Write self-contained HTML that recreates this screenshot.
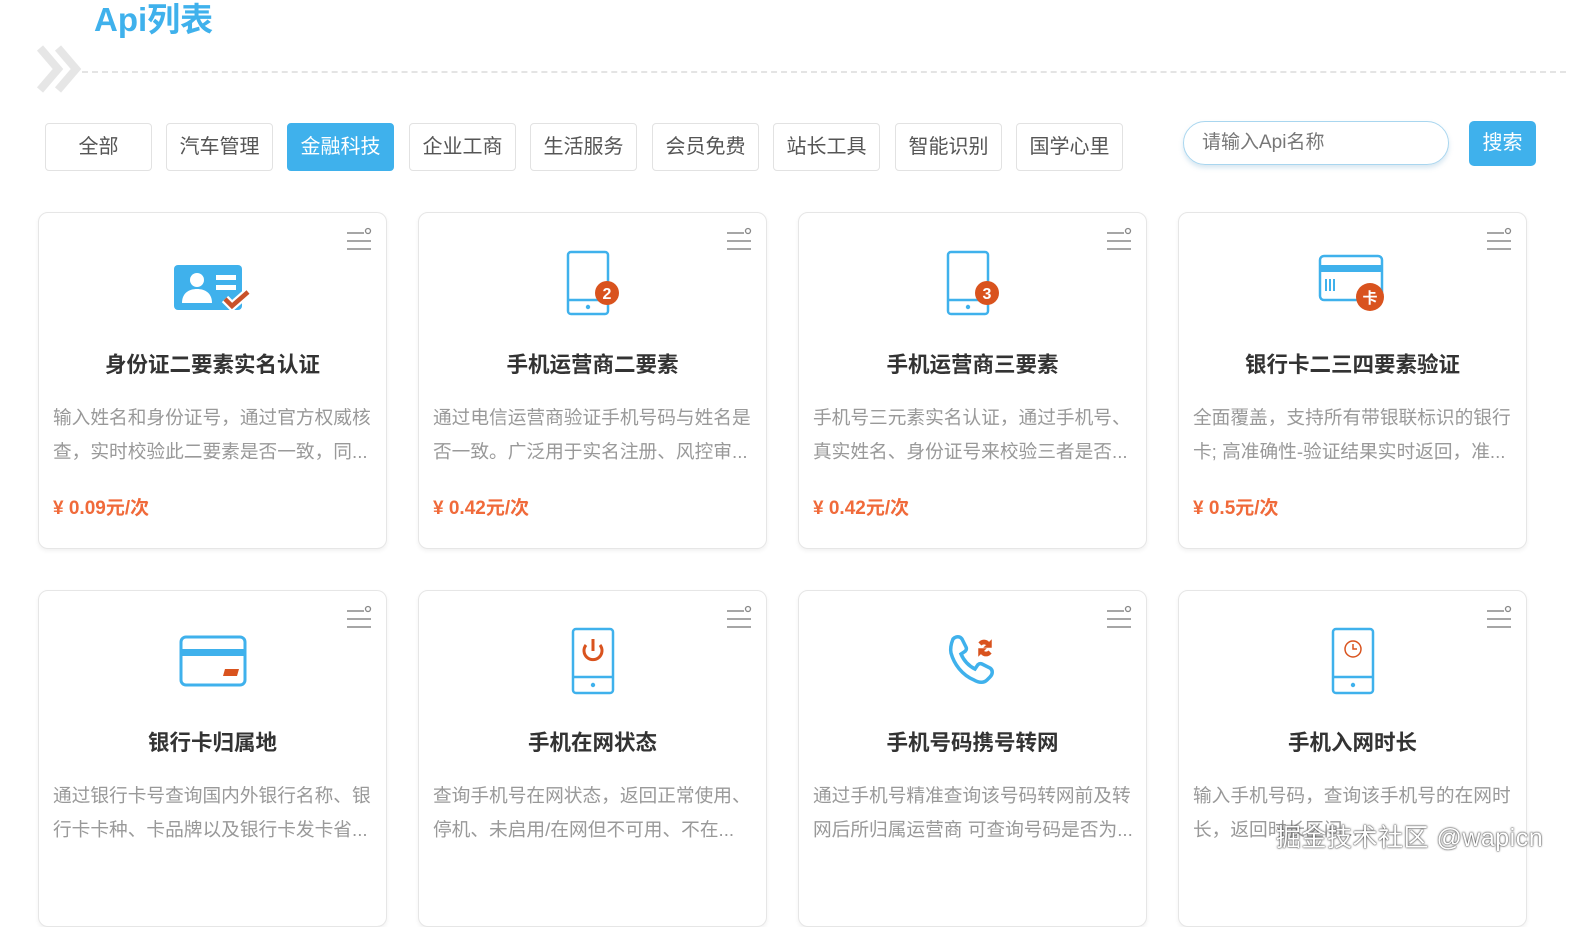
<!DOCTYPE html>
<html><head><meta charset="utf-8"><style>
*{margin:0;padding:0;box-sizing:border-box}
body{width:1586px;height:883px;overflow:hidden;background:#fff;font-family:"Liberation Sans","Noto Sans CJK SC",sans-serif;position:relative}
.title{position:absolute;left:94px;top:0;font-size:33px;font-weight:bold;color:#3fb1ec;line-height:40px}
.dash{position:absolute;left:82px;right:20px;top:71px;border-top:2px dashed #e4e4e4}
.chev{position:absolute;left:36px;top:44px}
.tab{position:absolute;top:123px;width:107px;height:48px;border:1px solid #e2e2e2;border-radius:4px;font-size:20px;color:#555;text-align:center;line-height:46px;background:#fff}
.tab.on{background:#3fb1ec;color:#fff;border-color:#3fb1ec}
.search{position:absolute;left:1183px;top:121px;width:266px;height:44px;border:1px solid #a9d6ef;border-radius:22px;box-shadow:0 3px 5px rgba(100,160,200,.25);font-size:19px;color:#777;line-height:42px;padding-left:18px}
.btn{position:absolute;left:1469px;top:121px;width:67px;height:45px;background:#3fb1ec;border-radius:5px;color:#fff;font-size:20px;text-align:center;line-height:45px}
.card{position:absolute;width:349px;height:337px;border:1px solid #e6e6e6;border-radius:10px;box-shadow:0 2px 4px rgba(0,0,0,.06);background:#fff}
.menu{position:absolute;right:14px;top:14px}
.icon{position:absolute;left:0;right:0;top:32px;height:76px;display:flex;justify-content:center;align-items:center}
.ct{position:absolute;left:0;right:0;top:135px;text-align:center;font-size:21.5px;font-weight:bold;color:#333}
.cd{position:absolute;left:14px;right:12px;top:188px;font-size:18.7px;line-height:34px;color:#999;height:68px;overflow:hidden}
.cp{position:absolute;left:14px;top:280px;font-size:19px;font-weight:bold;color:#f06a3a}
.wm{position:absolute;left:1276px;top:818px;font-size:25px;color:#fff;text-shadow:0 0 2px #333,0 0 1px #333;letter-spacing:0.5px}
</style></head><body>
<div class="title">Api列表</div>
<svg class="chev" width="48" height="50" viewBox="0 0 48 50"><path d="M4 4l18 21L4 46M22 4l18 21-18 21" fill="none" stroke="#e6e6e6" stroke-width="8"/></svg>
<div class="dash"></div>
<div class="tab" style="left:45px">全部</div>
<div class="tab" style="left:166px">汽车管理</div>
<div class="tab on" style="left:287px">金融科技</div>
<div class="tab" style="left:409px">企业工商</div>
<div class="tab" style="left:530px">生活服务</div>
<div class="tab" style="left:652px">会员免费</div>
<div class="tab" style="left:773px">站长工具</div>
<div class="tab" style="left:895px">智能识别</div>
<div class="tab" style="left:1016px">国学心里</div>
<div class="search">请输入Api名称</div>
<div class="btn">搜索</div>

<div class="card" style="left:38px;top:212px">
<svg class="menu" width="26" height="24"><path d="M1 6h17M1 14h24M1 22h24" stroke="#888" stroke-width="1.6"/><circle cx="22" cy="4" r="2.5" fill="none" stroke="#888" stroke-width="1.3"/></svg>
<div class="icon"><svg width="80" height="60" viewBox="0 0 80 60"><rect x="1" y="12" width="68" height="45" rx="4" fill="#3fb1ec"/><circle cx="24" cy="27" r="7" fill="#fff"/><path d="M9 50c0-10 7-14 15-14s15 4 15 14z" fill="#fff"/><rect x="43" y="22" width="20" height="5" fill="#fff"/><rect x="43" y="32" width="20" height="5" fill="#fff"/><path d="M52 46l7 7 16-14" stroke="#fff" stroke-width="9" fill="none"/><path d="M52 46l7 7 16-14" stroke="#c9522a" stroke-width="4.5" fill="none"/></svg></div>
<div class="ct">身份证二要素实名认证</div>
<div class="cd">输入姓名和身份证号，通过官方权威核查，实时校验此二要素是否一致，同...</div>
<div class="cp">¥ 0.09元/次</div></div>

<div class="card" style="left:418px;top:212px">
<svg class="menu" width="26" height="24"><path d="M1 6h17M1 14h24M1 22h24" stroke="#888" stroke-width="1.6"/><circle cx="22" cy="4" r="2.5" fill="none" stroke="#888" stroke-width="1.3"/></svg>
<div class="icon"><svg width="60" height="70" viewBox="0 0 60 70"><rect x="5" y="4" width="40" height="62" rx="3" fill="none" stroke="#3fb1ec" stroke-width="2.5"/><path d="M5 52h40" stroke="#3fb1ec" stroke-width="2.5"/><circle cx="25" cy="59" r="2.2" fill="#3fb1ec"/><circle cx="44" cy="45" r="12" fill="#d9531e"/><text x="44" y="51" font-size="16" font-weight="bold" fill="#fff" text-anchor="middle" font-family="Liberation Sans">2</text></svg></div>
<div class="ct">手机运营商二要素</div>
<div class="cd">通过电信运营商验证手机号码与姓名是否一致。广泛用于实名注册、风控审...</div>
<div class="cp">¥ 0.42元/次</div></div>

<div class="card" style="left:798px;top:212px">
<svg class="menu" width="26" height="24"><path d="M1 6h17M1 14h24M1 22h24" stroke="#888" stroke-width="1.6"/><circle cx="22" cy="4" r="2.5" fill="none" stroke="#888" stroke-width="1.3"/></svg>
<div class="icon"><svg width="60" height="70" viewBox="0 0 60 70"><rect x="5" y="4" width="40" height="62" rx="3" fill="none" stroke="#3fb1ec" stroke-width="2.5"/><path d="M5 52h40" stroke="#3fb1ec" stroke-width="2.5"/><circle cx="25" cy="59" r="2.2" fill="#3fb1ec"/><circle cx="44" cy="45" r="12" fill="#d9531e"/><text x="44" y="51" font-size="16" font-weight="bold" fill="#fff" text-anchor="middle" font-family="Liberation Sans">3</text></svg></div>
<div class="ct">手机运营商三要素</div>
<div class="cd">手机号三元素实名认证，通过手机号、真实姓名、身份证号来校验三者是否...</div>
<div class="cp">¥ 0.42元/次</div></div>

<div class="card" style="left:1178px;top:212px">
<svg class="menu" width="26" height="24"><path d="M1 6h17M1 14h24M1 22h24" stroke="#888" stroke-width="1.6"/><circle cx="22" cy="4" r="2.5" fill="none" stroke="#888" stroke-width="1.3"/></svg>
<div class="icon"><svg width="70" height="64" viewBox="0 0 70 64"><rect x="2" y="5" width="62" height="44" rx="4" fill="none" stroke="#3fb1ec" stroke-width="2.5"/><rect x="2" y="14" width="62" height="7" fill="#3fb1ec"/><path d="M8 28v12M12 28v12M16 28v12" stroke="#3fb1ec" stroke-width="2"/><circle cx="52" cy="46" r="14" fill="#d9531e"/><text x="52" y="52" font-size="15" font-weight="bold" fill="#fff" text-anchor="middle" font-family="Noto Sans CJK SC">卡</text></svg></div>
<div class="ct">银行卡二三四要素验证</div>
<div class="cd">全面覆盖，支持所有带银联标识的银行卡; 高准确性-验证结果实时返回，准...</div>
<div class="cp">¥ 0.5元/次</div></div>

<div class="card" style="left:38px;top:590px">
<svg class="menu" width="26" height="24"><path d="M1 6h17M1 14h24M1 22h24" stroke="#888" stroke-width="1.6"/><circle cx="22" cy="4" r="2.5" fill="none" stroke="#888" stroke-width="1.3"/></svg>
<div class="icon"><svg width="70" height="56" viewBox="0 0 70 56"><rect x="3" y="4" width="64" height="48" rx="5" fill="none" stroke="#3fb1ec" stroke-width="3"/><rect x="3" y="16" width="64" height="7" fill="#3fb1ec"/><path d="M47 36h14l-2 7H45z" fill="#d9531e"/></svg></div>
<div class="ct">银行卡归属地</div>
<div class="cd">通过银行卡号查询国内外银行名称、银行卡卡种、卡品牌以及银行卡发卡省...</div></div>

<div class="card" style="left:418px;top:590px">
<svg class="menu" width="26" height="24"><path d="M1 6h17M1 14h24M1 22h24" stroke="#888" stroke-width="1.6"/><circle cx="22" cy="4" r="2.5" fill="none" stroke="#888" stroke-width="1.3"/></svg>
<div class="icon"><svg width="44" height="68" viewBox="0 0 44 68"><rect x="2" y="2" width="40" height="64" rx="3" fill="none" stroke="#3fb1ec" stroke-width="2.5"/><path d="M2 50h40" stroke="#3fb1ec" stroke-width="2.5"/><circle cx="22" cy="58" r="2.2" fill="#3fb1ec"/><path d="M15 18a9 9 0 1 0 14 0" stroke="#d9531e" stroke-width="3" fill="none"/><path d="M22 12v12" stroke="#d9531e" stroke-width="3"/></svg></div>
<div class="ct">手机在网状态</div>
<div class="cd">查询手机号在网状态，返回正常使用、停机、未启用/在网但不可用、不在...</div></div>

<div class="card" style="left:798px;top:590px">
<svg class="menu" width="26" height="24"><path d="M1 6h17M1 14h24M1 22h24" stroke="#888" stroke-width="1.6"/><circle cx="22" cy="4" r="2.5" fill="none" stroke="#888" stroke-width="1.3"/></svg>
<div class="icon"><svg width="60" height="60" viewBox="0 0 60 60"><path d="M10 8c3-3 7-3 9 0l4 8c1 2 0 4-2 5l-3 2c3 7 8 12 14 15l2-3c1-2 3-3 5-2l8 4c3 2 3 6 0 9l-3 3c-3 3-8 3-13 0C19 44 11 33 8 22c-1-5 0-9 2-14z" fill="none" stroke="#3fb1ec" stroke-width="3.5"/><path d="M36 12a6 6 0 0 1 10 0l2-2v6h-6l2-2a4 4 0 0 0-6 0M48 22a6 6 0 0 1-10 0l-2 2v-6h6l-2 2a4 4 0 0 0 6 0" fill="#d9531e" stroke="#d9531e" stroke-width="1.5"/></svg></div>
<div class="ct">手机号码携号转网</div>
<div class="cd">通过手机号精准查询该号码转网前及转网后所归属运营商 可查询号码是否为...</div></div>

<div class="card" style="left:1178px;top:590px">
<svg class="menu" width="26" height="24"><path d="M1 6h17M1 14h24M1 22h24" stroke="#888" stroke-width="1.6"/><circle cx="22" cy="4" r="2.5" fill="none" stroke="#888" stroke-width="1.3"/></svg>
<div class="icon"><svg width="44" height="68" viewBox="0 0 44 68"><rect x="2" y="2" width="40" height="64" rx="3" fill="none" stroke="#3fb1ec" stroke-width="2.5"/><path d="M2 50h40" stroke="#3fb1ec" stroke-width="2.5"/><circle cx="22" cy="58" r="2.2" fill="#3fb1ec"/><circle cx="22" cy="22" r="8" fill="none" stroke="#d9531e" stroke-width="1.5"/><path d="M22 17v5h4" stroke="#d9531e" stroke-width="1.5" fill="none"/></svg></div>
<div class="ct">手机入网时长</div>
<div class="cd">输入手机号码，查询该手机号的在网时长，返回时长区间...</div></div>

<div class="wm">掘金技术社区 @wapicn</div>
</body></html>
